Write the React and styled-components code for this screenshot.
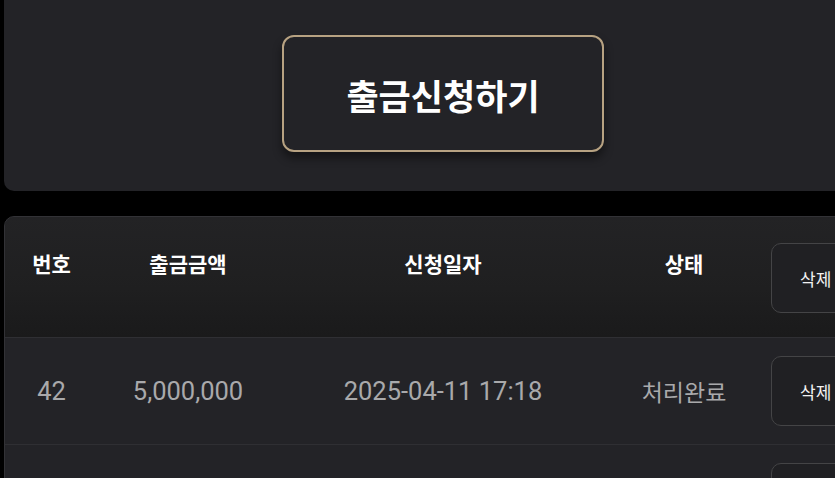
import React from "react";
import styled, { createGlobalStyle } from "styled-components";

const GlobalStyle = createGlobalStyle`
  html, body {
    margin: 0;
    padding: 0;
    background: #000;
    overflow: hidden;
  }
  body {
    font-family: "Noto Sans CJK KR", "Noto Sans", sans-serif;
  }
`;

const Page = styled.div`
  width: 878px;
  padding-left: 4px;
  margin-top: -40px;
  display: flex;
  flex-direction: column;
  gap: 25px;
`;

const RequestPanel = styled.section`
  height: 231px;
  box-sizing: border-box;
  padding-top: 75px;
  background: #232327;
  border-radius: 10px;
  display: flex;
  justify-content: center;
  align-items: flex-start;
`;

const RequestButton = styled.button`
  width: 322px;
  height: 117px;
  box-sizing: border-box;
  padding-top: 3px;
  background: #232327;
  border: 2px solid #b7a282;
  border-radius: 12px;
  box-shadow: 0 6px 10px rgba(0, 0, 0, 0.45);
  color: #fff;
  font-family: "Noto Sans CJK KR", sans-serif;
  font-weight: 700;
  font-size: 35px;
  cursor: pointer;
`;

const TablePanel = styled.section`
  background: #232327;
  border: 1px solid #323236;
  border-radius: 10px;
  overflow: hidden;
  height: 400px;
`;

const Row = styled.div`
  display: grid;
  grid-template-columns: 93px 180px 330px 152px 1fr;
  align-items: ${(p) => (p.$head ? "start" : "center")};
  height: ${(p) => (p.$head ? "121px" : "107px")};
  box-sizing: border-box;
  border-bottom: 1px solid #2f2f33;
  background: ${(p) =>
    p.$head ? "linear-gradient(180deg, #232325 0%, #1f1f20 60%, #1a1a1b 100%)" : "#232327"};
`;

const HeadCell = styled.div`
  padding-top: 32px;
  text-align: center;
  color: #fff;
  font-weight: 700;
  font-size: 21px;
  line-height: 28px;
`;

const Cell = styled.div`
  text-align: center;
  color: #a9a9ab;
  font-family: ${(p) => (p.$korean ? '"Noto Sans CJK KR", sans-serif' : 'Roboto, "Noto Sans CJK KR", sans-serif')};
  font-size: ${(p) => (p.$korean ? "23px" : "25.5px")};
  line-height: 30px;
`;

const DeleteButton = styled.button`
  margin-left: 11px;
  margin-top: ${(p) => (p.$head ? "26px" : "0")};
  width: 120px;
  height: 70px;
  box-sizing: border-box;
  background: #202023;
  border: 1.5px solid #444446;
  border-radius: 10px;
  color: #f2f2f2;
  font-family: "Noto Sans CJK KR", sans-serif;
  font-size: 17px;
  text-align: left;
  padding-left: 28px;
  cursor: pointer;
`;

const rows = [
  { id: 42, amount: "5,000,000", date: "2025-04-11 17:18", status: "처리완료" },
  { id: 41, amount: "3,000,000", date: "2025-04-10 12:02", status: "처리완료" },
];

export default function App() {
  return (
    <>
      <GlobalStyle />
      <Page>
        <RequestPanel>
          <RequestButton>출금신청하기</RequestButton>
        </RequestPanel>
        <TablePanel>
          <Row $head>
            <HeadCell>번호</HeadCell>
            <HeadCell>출금금액</HeadCell>
            <HeadCell>신청일자</HeadCell>
            <HeadCell>상태</HeadCell>
            <DeleteButton $head>삭제</DeleteButton>
          </Row>
          {rows.map((r) => (
            <Row key={r.id}>
              <Cell>{r.id}</Cell>
              <Cell>{r.amount}</Cell>
              <Cell>{r.date}</Cell>
              <Cell $korean>{r.status}</Cell>
              <DeleteButton>삭제</DeleteButton>
            </Row>
          ))}
        </TablePanel>
      </Page>
    </>
  );
}
